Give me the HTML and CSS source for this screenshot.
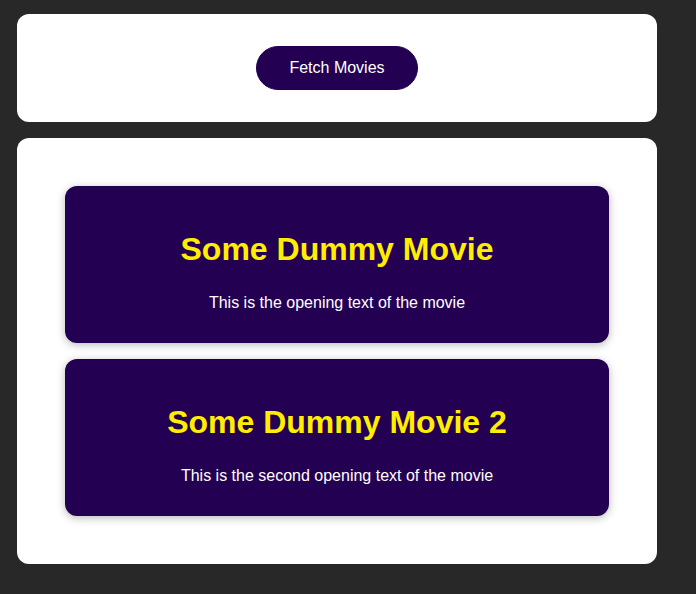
FILE: index.html
```html
<!DOCTYPE html>
<html>
<head>
<meta charset="utf-8">
<link rel="stylesheet" href="styles.css">
</head>
<body>
<div class="app">
  <section class="panel panel-top">
    <button class="fetch-btn">Fetch Movies</button>
  </section>
  <section class="panel panel-list">
    <ul class="movies-list">
      <li class="movie">
        <h2>Some Dummy Movie</h2>
        <p>This is the opening text of the movie</p>
      </li>
      <li class="movie">
        <h2>Some Dummy Movie 2</h2>
        <p>This is the second opening text of the movie</p>
      </li>
    </ul>
  </section>
</div>
</body>
</html>
```

FILE: styles.css
```css
html, body {
  margin: 0;
  padding: 0;
  background: #282828;
  font-family: "Liberation Sans", Arial, sans-serif;
}

.app {
  display: flex;
  flex-direction: column;
  gap: 16px;
  padding: 14px 0 0 17px;
  width: 640px;
}

.panel {
  background: #ffffff;
  border-radius: 12px;
  text-align: center;
  box-sizing: border-box;
}

.panel-top {
  height: 108px;
  display: flex;
  align-items: center;
  justify-content: center;
}

.fetch-btn {
  font: 16px "Liberation Sans", Arial, sans-serif;
  background: #230052;
  border: 1px solid #230052;
  color: #ffffff;
  height: 44px;
  width: 162px;
  padding: 0;
  border-radius: 22px;
  cursor: pointer;
}

.panel-list {
  padding: 48px;
}

.movies-list {
  list-style: none;
  margin: 0;
  padding: 0;
  display: flex;
  flex-direction: column;
  gap: 16px;
}

.movie {
  background: #230052;
  color: #ffffff;
  border-radius: 12px;
  box-shadow: 0 2px 8px rgba(0, 0, 0, 0.28);
  height: 157px;
  box-sizing: border-box;
  padding-top: 45px;
}

.movie h2 {
  margin: 0;
  font-size: 32px;
  line-height: 37px;
  font-weight: bold;
  color: #ffee00;
}

.movie p {
  margin: 26px 0 0;
  font-size: 16px;
  line-height: 18px;
}
```
